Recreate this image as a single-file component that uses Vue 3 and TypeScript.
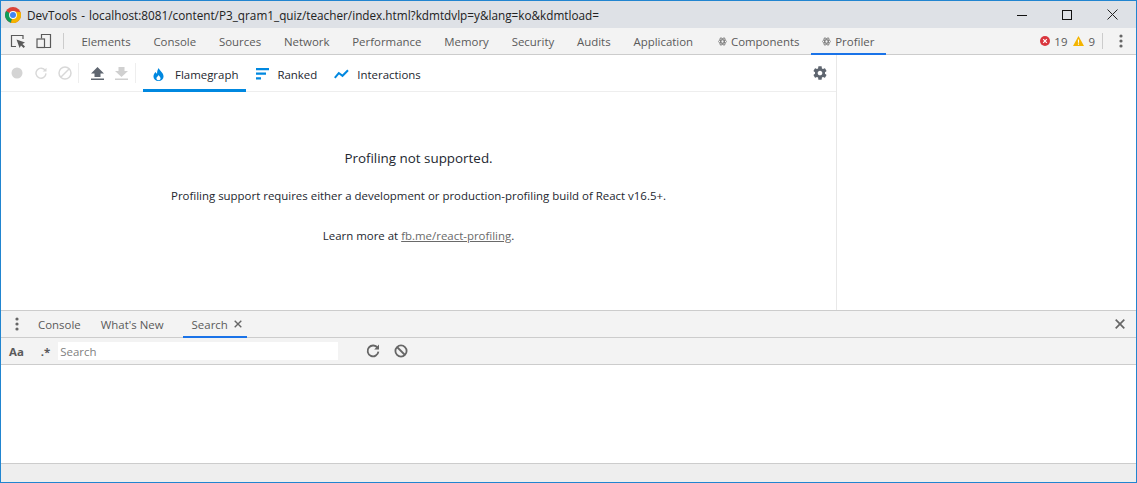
<script setup lang="ts">
const tabs: string[] = ['Elements', 'Console', 'Sources', 'Network', 'Performance', 'Memory', 'Security', 'Audits', 'Application']
</script>

<template>
  <div class="win">
    <header class="title">
      <svg class="chrome" viewBox="0 0 16 16" width="16" height="16">
        <circle cx="8" cy="8" r="8" fill="#db4437" />
        <path d="M8 8 L1.1 4 A8 8 0 0 0 6 15.8 Z" fill="#0f9d58" />
        <path d="M8 4.5 L15.4 4.9 A8 8 0 0 1 6 15.8 L8 8 Z" fill="#f4b400" />
        <circle cx="8" cy="8" r="3.9" fill="#fff" />
        <circle cx="8" cy="8" r="3" fill="#4285f4" />
      </svg>
      <span class="title-text">DevTools - localhost:8081/content/P3_qram1_quiz/teacher/index.html?kdmtdvlp=y&amp;lang=ko&amp;kdmtload=</span>
      <div class="win-btns">
        <svg viewBox="0 0 10 10" width="10" height="10"><path d="M0 5.5H10" stroke="#111" fill="none" /></svg>
        <svg viewBox="0 0 10 10" width="10" height="10"><rect x=".5" y=".5" width="9" height="9" stroke="#111" fill="none" /></svg>
        <svg viewBox="0 0 11 11" width="11" height="11"><path d="M.5 .5L10.5 10.5M10.5 .5L.5 10.5" stroke="#222" fill="none" /></svg>
      </div>
    </header>

    <nav class="main-tabs">
      <button class="tool first">
        <svg viewBox="0 0 16 16" width="16" height="16">
          <path d="M6 13.5H1.5V2.5H13V6" fill="none" stroke="#5a5a5a" stroke-width="1.2" />
          <path d="M6.5 6.5L15 9.6L12.4 11L15 13.6L13.6 15L11 12.4L9.6 15Z" fill="#5a5a5a" />
        </svg>
      </button>
      <button class="tool second">
        <svg viewBox="0 0 16 16" width="16" height="16">
          <path d="M5.5 5.5V1.5H14.5V14.5H9" fill="none" stroke="#5a5a5a" stroke-width="1.2" />
          <rect x="1" y="6" width="7.5" height="8.5" fill="none" stroke="#5a5a5a" stroke-width="1.2" />
        </svg>
      </button>
      <span class="vsep main-sep"></span>
      <span v-for="t in tabs" :key="t" class="mtab">{{ t }}</span>
      <span class="mtab react comps">
        <svg class="atom" viewBox="0 0 10 10" width="9" height="9"><g fill="none" stroke="#777" stroke-width=".9"><ellipse cx="5" cy="5" rx="4.6" ry="1.8" /><ellipse cx="5" cy="5" rx="4.6" ry="1.8" transform="rotate(60 5 5)" /><ellipse cx="5" cy="5" rx="4.6" ry="1.8" transform="rotate(120 5 5)" /></g></svg>Components</span>
      <span class="mtab react active">
        <svg class="atom" viewBox="0 0 10 10" width="9" height="9"><g fill="none" stroke="#777" stroke-width=".9"><ellipse cx="5" cy="5" rx="4.6" ry="1.8" /><ellipse cx="5" cy="5" rx="4.6" ry="1.8" transform="rotate(60 5 5)" /><ellipse cx="5" cy="5" rx="4.6" ry="1.8" transform="rotate(120 5 5)" /></g></svg>Profiler</span>
      <div class="status">
        <svg viewBox="0 0 10 10" width="10" height="10"><circle cx="5" cy="5" r="5" fill="#d9363e" /><path d="M3.2 3.2L6.8 6.8M6.8 3.2L3.2 6.8" stroke="#fff" stroke-width="1.2" /></svg>
        <span class="count c1">19</span>
        <svg viewBox="0 0 11 10" width="11" height="10"><path d="M5.5 0L11 10H0Z" fill="#f4b400" /><path d="M5.5 3.4V6.8M5.5 7.6V8.8" stroke="#fff" stroke-width="1.1" /></svg>
        <span class="count">9</span>
        <span class="vsep status-sep"></span>
        <svg class="kebab" viewBox="0 0 4 14" width="4" height="14"><circle cx="2" cy="2" r="1.6" fill="#666" /><circle cx="2" cy="7" r="1.6" fill="#666" /><circle cx="2" cy="12" r="1.6" fill="#666" /></svg>
      </div>
    </nav>

    <section class="profiler">
      <div class="left">
        <div class="ptoolbar">
          <svg class="pi rec" viewBox="0 0 12 12" width="12" height="12"><circle cx="6" cy="6" r="5.5" fill="#d4d4d4" /></svg>
          <svg class="pi reload" viewBox="0 0 12 12" width="12" height="12"><path d="M10.3 3.6A5 5 0 1 0 11 6.4" fill="none" stroke="#d8d8d8" stroke-width="1.4" /><path d="M11.5 .8V4.6H7.7Z" fill="#d8d8d8" /></svg>
          <svg class="pi clear" viewBox="0 0 14 14" width="14" height="14"><circle cx="7" cy="7" r="6" fill="none" stroke="#d8d8d8" stroke-width="1.5" /><path d="M3 11L11 3" stroke="#d8d8d8" stroke-width="1.5" /></svg>
          <span class="vsep p-sep1"></span>
          <svg class="pi up" viewBox="0 0 13 13" width="13" height="13"><path d="M6.5 0L13 6.5H9.5V10H3.5V6.5H0Z" fill="#5f6670" /><rect y="11.5" width="13" height="1.5" fill="#5f6670" /></svg>
          <svg class="pi down" viewBox="0 0 13 13" width="13" height="13"><path d="M3.5 0H9.5V4H13L6.5 10L0 4H3.5Z" fill="#d0d0d0" /><rect y="11.5" width="13" height="1.5" fill="#d0d0d0" /></svg>
          <span class="vsep p-sep2"></span>
          <div class="ptab on">
            <svg viewBox="0 0 12 14" width="11" height="13"><path d="M6.3 0C6.8 2.6 11.5 5 11.5 9.2A5.5 4.8 0 0 1 .5 9.2C.5 6.8 2 5.6 2.8 4.4C3.2 5.4 3.7 6 4.4 6.2C4.4 3.8 5 1.6 6.3 0Z" fill="#0088e0" /><path d="M6.2 7.5C6.4 8.8 8.3 9.6 8.3 11.2A2.3 2.2 0 0 1 3.7 11.2C3.7 9.8 5.4 9.2 6.2 7.5Z" fill="#fff" /></svg>
            <span class="ptab-label">Flamegraph</span>
          </div>
          <div class="ptab ranked">
            <svg viewBox="0 0 13 12" width="13" height="12"><path d="M0 0H13V2.2H0ZM0 4.6H10V6.8H0ZM0 9.2H5V11.4H0Z" fill="#0088e0" /></svg>
            <span class="ptab-label">Ranked</span>
          </div>
          <div class="ptab inter">
            <svg viewBox="0 0 15 10" width="15" height="10"><path d="M.8 8.8L4.8 4L8.5 6.8L14 1.2" fill="none" stroke="#0088e0" stroke-width="2" /></svg>
            <span class="ptab-label">Interactions</span>
          </div>
          <svg class="gear" viewBox="0 0 24 24" width="16" height="16"><path fill="#5f6670" d="M19.43 12.98c.04-.32.07-.64.07-.98s-.03-.66-.07-.98l2.11-1.65c.19-.15.24-.42.12-.64l-2-3.46c-.12-.22-.39-.3-.61-.22l-2.49 1c-.52-.4-1.08-.73-1.69-.98l-.38-2.65C14.46 2.18 14.25 2 14 2h-4c-.25 0-.46.18-.49.42l-.38 2.65c-.61.25-1.17.59-1.69.98l-2.49-1c-.23-.09-.49 0-.61.22l-2 3.46c-.13.22-.07.49.12.64l2.11 1.65c-.04.32-.07.65-.07.98s.03.66.07.98l-2.11 1.65c-.19.15-.24.42-.12.64l2 3.46c.12.22.39.3.61.22l2.49-1c.52.4 1.08.73 1.69.98l.38 2.65c.03.24.24.42.49.42h4c.25 0 .46-.18.49-.42l.38-2.65c.61-.25 1.17-.59 1.69-.98l2.49 1c.23.09.49 0 .61-.22l2-3.46c.12-.22.07-.49-.12-.64l-2.11-1.65zM12 15.5c-1.93 0-3.5-1.57-3.5-3.5s1.57-3.5 3.5-3.5 3.5 1.57 3.5 3.5-1.57 3.5-3.5 3.5z" /></svg>
        </div>
        <div class="message">
          <p class="m-head">Profiling not supported.</p>
          <p class="m-line">Profiling support requires either a development or production-profiling build of React v16.5+.</p>
          <p class="m-line last">Learn more at <a class="m-link">fb.me/react-profiling</a>.</p>
        </div>
      </div>
      <aside class="right"></aside>
    </section>

    <section class="drawer">
      <div class="dtabs">
        <svg class="d-kebab" viewBox="0 0 4 14" width="4" height="14"><circle cx="2" cy="2" r="1.6" fill="#666" /><circle cx="2" cy="7" r="1.6" fill="#666" /><circle cx="2" cy="12" r="1.6" fill="#666" /></svg>
        <span class="dtab d1">Console</span>
        <span class="dtab d2">What's New</span>
        <span class="dtab d3 active">Search
          <svg class="tabx" viewBox="0 0 8 8" width="8" height="8"><path d="M.7 .7L7.3 7.3M7.3 .7L.7 7.3" stroke="#666" stroke-width="1.4" /></svg>
        </span>
        <svg class="d-close" viewBox="0 0 10 10" width="10" height="10"><path d="M.7 .7L9.3 9.3M9.3 .7L.7 9.3" stroke="#666" stroke-width="1.7" /></svg>
      </div>
      <div class="dsearch">
        <span class="aa">Aa</span>
        <span class="regex">.*</span>
        <span class="sinput">Search</span>
        <svg class="s-reload" viewBox="0 0 14 14" width="14" height="14"><path d="M11.6 4A5.4 5.4 0 1 0 12.4 7.6" fill="none" stroke="#666" stroke-width="1.8" /><path d="M13 .6V5.4H8.2Z" fill="#666" /></svg>
        <svg class="s-clear" viewBox="0 0 14 14" width="14" height="14"><circle cx="7" cy="7" r="5.6" fill="none" stroke="#666" stroke-width="1.8" /><path d="M3 3L11 11" stroke="#666" stroke-width="1.8" /></svg>
      </div>
      <div class="dbody"></div>
      <div class="dfoot"></div>
    </section>
  </div>
</template>

<style>
html, body { margin: 0; background: #fff; }
</style>

<style scoped>
.win {
  box-sizing: border-box; width: 1137px; height: 483px;
  border: 1px solid #2185d0;
  display: flex; flex-direction: column; overflow: hidden;
  font-family: "Open Sans", "Noto Sans", sans-serif; font-size: 11.45px; color: #4a4a4a; background: #fff;
}
.title { height: 27px; flex: none; background: #dee1e6; display: flex; align-items: center; color: #222; }
.chrome { margin-left: 4px; margin-right: 6px; }
.title-text { font-size: 11.75px; word-spacing: 1px; white-space: pre; }
.win-btns { margin-left: auto; display: flex; align-items: center; gap: 35px; margin-right: 18px; }
.main-tabs { height: 27px; flex: none; box-sizing: border-box; background: #f3f3f3; border-bottom: 1px solid #ccc; display: flex; align-items: stretch; }
.tool { border: 0; background: none; padding: 0; display: flex; align-items: center; }
.tool.first { margin-left: 9px; }
.tool.second { margin-left: 10px; }
.vsep { width: 1px; background: #ccc; display: block; }
.main-sep { height: 16px; align-self: center; margin: 0 6px 0 11px; }
.mtab { padding: 0 11.4px; display: flex; align-items: center; color: #5a5a5a; white-space: nowrap; position: relative; }
.comps { margin-left: 2px; }
.atom { margin-right: 4px; }
.mtab.active::after { content: ""; position: absolute; left: 0; right: 0; bottom: -1px; height: 2px; background: #1a73e8; }
.status { margin-left: auto; display: flex; align-items: center; }
.status svg:first-child { margin-right: 4px; }
.count { color: #5a5a5a; margin-left: 0; }
.c1 { margin-right: 6px; }
.count + svg { margin-right: 4px; }
.status-sep { height: 16px; margin: 0 16px 0 7px; }
.kebab { margin-right: 13px; }
.profiler { height: 255px; flex: none; display: flex; }
.left { width: 835px; flex: none; border-right: 1px solid #e8e8e8; display: flex; flex-direction: column; }
.right { flex: 1; }
.ptoolbar { height: 37px; flex: none; box-sizing: border-box; border-bottom: 1px solid #eee; display: flex; align-items: center; }
.pi { flex: none; }
.rec { margin-left: 10px; }
.reload { margin-left: 12px; }
.clear { margin-left: 11px; }
.p-sep1 { width: 1px; height: 20px; background: #eee; margin: 0 12px 0 6px; }
.down { margin-left: 11px; }
.p-sep2 { width: 1px; height: 20px; background: #eee; margin: 0 7px 0 7px; }
.ptab { height: 36px; box-sizing: border-box; display: flex; align-items: center; padding: 2px 0 0; color: #23272f; position: relative; }
.ptab-label { margin-left: 8px; }
.ptab.on { padding: 2px 8px 0 10px; }
.ptab.on .ptab-label { margin-left: 11px; }
.ptab.ranked { margin-left: 10px; }
.ptab.inter { margin-left: 17px; }
.ptab.on::after { content: ""; position: absolute; left: 0; right: 0; bottom: -1px; height: 3px; background: #0088e0; }
.gear { margin-left: auto; margin-right: 8px; }
.message { flex: 1; display: flex; flex-direction: column; align-items: center; color: #23272f; }
.m-head { margin: 57px 0 0; font-size: 13.4px; line-height: 18px; }
.m-line { margin: 21px 0 0; line-height: 16px; }
.m-line.last { margin-top: 24px; }
.m-link { color: #6a6a6a; text-decoration: underline; }
.drawer { flex: 1; display: flex; flex-direction: column; min-height: 0; }
.dtabs { height: 28px; flex: none; box-sizing: border-box; background: #f3f3f3; border-top: 1px solid #ccc; border-bottom: 1px solid #ccc; display: flex; align-items: center; position: relative; }
.d-kebab { margin-left: 14px; }
.dtab { height: 26px; display: flex; align-items: center; color: #5a5a5a; position: relative; white-space: nowrap; }
.d1 { margin-left: 19px; }
.d2 { margin-left: 20px; }
.d3 { margin-left: 19px; padding: 0 5px 0 9px; gap: 6px; }
.d3::after { content: ""; position: absolute; left: 0; right: 0; bottom: -1px; height: 2px; background: #1a73e8; }
.d-close { margin-left: auto; margin-right: 11px; }
.dsearch { height: 27px; flex: none; box-sizing: border-box; background: #f3f3f3; border-bottom: 1px solid #ccc; display: flex; align-items: center; }
.aa { margin-left: 8px; font-weight: 700; color: #5a5a5a; }
.regex { margin-left: 17px; font-weight: 700; color: #5a5a5a; }
.sinput { margin-left: 8px; width: 280px; height: 18px; line-height: 19px; background: #fff; color: #808080; box-sizing: border-box; text-indent: 2px; }
.s-reload { margin-left: 28px; }
.s-clear { margin-left: 14px; }
.dbody { flex: 1; background: #fff; }
.dfoot { height: 19px; flex: none; box-sizing: border-box; background: #eee; border-top: 1px solid #ccc; }
</style>
